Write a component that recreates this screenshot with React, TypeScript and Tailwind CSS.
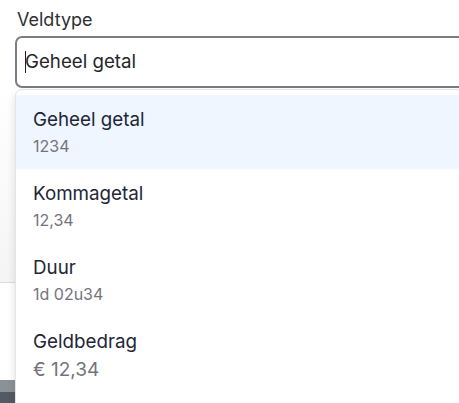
import React from "react";

const options = [
  { title: "Geheel getal", sample: "1234", active: true },
  { title: "Kommagetal", sample: "12,34" },
  { title: "Duur", sample: "1d 02u34" },
  { title: "Geldbedrag", sample: "€ 12,34", big: true },
];

export default function App() {
  return (
    <div className="relative h-[403px] w-[459px] overflow-hidden bg-white font-['Inter',sans-serif]">
      <div className="pl-[17px] pt-[8px]">
        <label className="block text-[18px] leading-[24px] text-[#2f2f33]">Veldtype</label>
      </div>
      {/* the select box runs off the right edge */}
      <div className="ml-[15px] mt-[4px] flex h-[52px] w-[470px] items-center rounded-[7px] border-2 border-[#7c7b86] pl-[8px]">
        <span className="mr-[-1px] inline-block h-[22px] w-px bg-[#222]"></span>
        <span className="text-[18.7px] text-[#26262b]">Geheel getal</span>
        <svg className="ml-auto mr-[4px] mb-[4px]" width="10" height="6" viewBox="0 0 10 6" fill="none">
          <path d="M1 1l4 4 4-4" stroke="#a3a3ab" strokeWidth="1.5" />
        </svg>
      </div>

      {/* page content behind the menu */}
      <div className="mt-[2px] h-[193px] border-b border-[#dcdcdf] bg-gradient-to-b from-white to-[#f5f5f6]"></div>
      <div className="mt-[97px] h-[12px] bg-[#8b9199]"></div>
      <div className="h-[12px] bg-[#525a63]"></div>

      {/* dropdown menu */}
      <div className="absolute left-[15px] top-[89px] h-[340px] w-[470px] rounded-[7px] border border-[#e4e4e7] bg-white py-[5px] shadow-[0_4px_10px_rgba(0,0,0,0.12)]">
        {options.map((o) => (
          <div
            key={o.title}
            className={`h-[74px] pl-[17px] pt-[12px] ${o.active ? "bg-[#eff6ff]" : ""}`}
          >
            <div className="text-[18.8px] leading-[26px] text-[#1e2637]">{o.title}</div>
            <div
              className={
                o.big
                  ? "mt-[2px] text-[19px] leading-[26px] text-[#74737d]"
                  : "text-[16px] leading-[26px] text-[#74737d]"
              }
            >
              {o.sample}
            </div>
          </div>
        ))}
      </div>
    </div>
  );
}
